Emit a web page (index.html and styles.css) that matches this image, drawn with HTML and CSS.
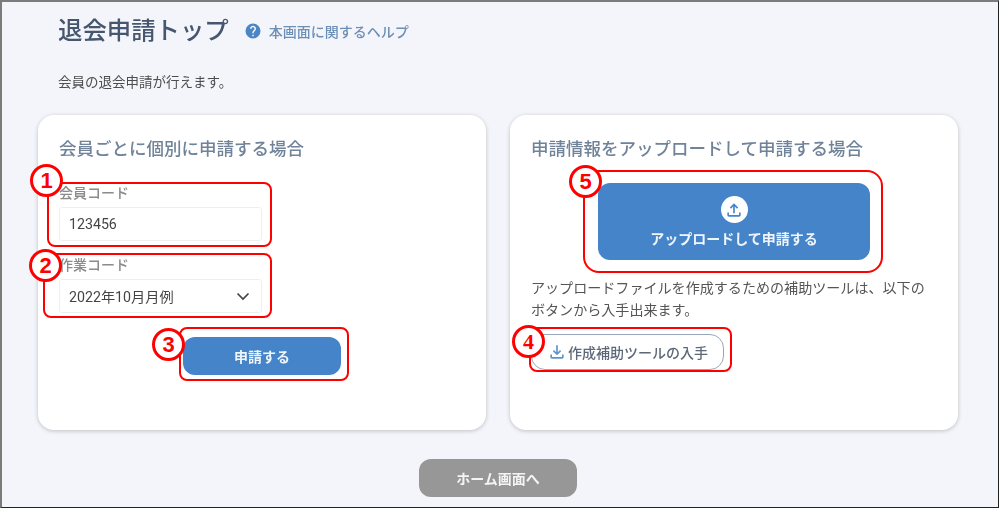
FILE: index.html
```html
<!DOCTYPE html>
<html lang="ja">
<head>
    <meta charset="UTF-8">
    <title>退会申請トップ</title>
    <link rel="stylesheet" href="styles.css">
</head>
<body>
<div class="frame">
    <div class="pageHead">
        <h1 class="pageTitle">退会申請トップ</h1>
        <a class="helpLink">
            <svg class="helpIcon" viewBox="0 0 24 24"><path d="M12 2a10 10 0 1 0 0 20 10 10 0 0 0 0-20zm1 17h-2v-2h2v2zm2.07-7.75l-.9.92C13.45 12.9 13 13.5 13 15h-2v-.5c0-1.1.45-2.1 1.17-2.83l1.24-1.26c.37-.36.59-.86.59-1.41 0-1.1-.9-2-2-2s-2 .9-2 2H8c0-2.21 1.79-4 4-4s4 1.79 4 4c0 .88-.36 1.68-.93 2.25z"/></svg>
            本画面に関するヘルプ
        </a>
    </div>
    <p class="pageDesc">会員の退会申請が行えます。</p>

    <div class="cards">
        <section class="card">
            <h2 class="cardTitle">会員ごとに個別に申請する場合</h2>
            <div class="field">
                <label class="fieldLabel">会員コード</label>
                <div class="fieldBox">123456</div>
            </div>
            <div class="field">
                <label class="fieldLabel">作業コード</label>
                <div class="fieldBox">
                    2022年10月月例
                    <svg class="chevron" viewBox="0 0 14 9"><path d="M1.5 1.5 7 7l5.500-5.500"/></svg>
                </div>
            </div>
            <div class="submitRow">
                <button class="btn btnSubmit">申請する</button>
            </div>
        </section>

        <section class="card">
            <h2 class="cardTitle">申請情報をアップロードして申請する場合</h2>
            <div class="uploadRow">
                <button class="btn btnUpload">
                    <span class="uploadIcon">
                        <svg viewBox="0 0 24 24"><path d="M18 15v3H6v-3H4v3c0 1.100.9 2 2 2h12c1.100 0 2-.9 2-2v-3h-2zM7 9l1.410 1.410L11 7.830V16h2V7.830l2.590 2.580L17 9l-5-5-5 5z"/></svg>
                    </span>
                    アップロードして申請する
                </button>
            </div>
            <p class="cardText">アップロードファイルを作成するための補助ツールは、以下の<br>ボタンから入手出来ます。</p>
            <button class="btnTool">
                <svg class="toolIcon" viewBox="0 0 24 24"><path d="M18 15v3H6v-3H4v3c0 1.100.9 2 2 2h12c1.100 0 2-.9 2-2v-3h-2zm-1-4-1.410-1.410L13 12.170V4h-2v8.170L8.410 9.590 7 11l5 5 5-5z"/></svg>
                作成補助ツールの入手
            </button>
        </section>
    </div>

    <div class="homeRow">
        <button class="btn btnHome">ホーム画面へ</button>
    </div>

    <!-- 赤枠と番号の注記 -->
    <div class="note box1"></div>
    <div class="note box2"></div>
    <div class="note box3"></div>
    <div class="note box4"></div>
    <div class="note box5"></div>
    <span class="num num1">1</span>
    <span class="num num2">2</span>
    <span class="num num3">3</span>
    <span class="num num4">4</span>
    <span class="num num5">5</span>
</div>
</body>
</html>
```

FILE: styles.css
```css
* {
    box-sizing: border-box;
}

html, body {
    margin: 0;
    background: #fff;
}

.frame {
    position: relative;
    width: 999px;
    height: 508px;
    padding: 12px 0 0 0;
    overflow: hidden;
    background: #f4f5fa;
    border-top: 2px solid #7b7b7b;
    border-left: 2px solid #7b7b7b;
    border-right: 1px solid #222;
    border-bottom: 1px solid #222;
    font-family: "Noto Sans CJK JP", "Noto Sans", sans-serif;
    color: #4a4a4a;
}

/* 元画像が縮小でぼやけているので本文だけ少しぼかす */
.pageHead, .pageDesc, .cards, .homeRow {
    filter: blur(.35px);
}

.pageHead {
    display: flex;
    align-items: center;
    height: 30px;
    padding-left: 56px;
}

.pageTitle {
    margin: 0;
    font-size: 24.4px;
    line-height: 30px;
    font-weight: 500;
    color: #46566e;
}

.helpLink {
    display: flex;
    align-items: center;
    margin: 3px 0 0 15px;
    font-size: 14px;
    font-weight: 500;
    color: #6c8fb5;
}

.helpIcon {
    width: 18px;
    height: 18px;
    margin-right: 7px;
    fill: #4a86c5;
}

.pageDesc {
    margin: 27px 0 0 56px;
    font-size: 13.5px;
    line-height: 20px;
    color: #4d4d4d;
}

.cards {
    display: flex;
    gap: 24px;
    margin: 24px 0 0 36px;
}

.card {
    width: 448px;
    height: 315px;
    padding: 21px 21px 0;
    background: #fff;
    border-radius: 16px;
    box-shadow: 0 1px 4px rgba(0, 0, 0, .22);
}

.cardTitle {
    margin: 0;
    font-size: 17.5px;
    line-height: 24px;
    font-weight: 500;
    color: #708399;
}

.field {
    margin-top: 22px;
    height: 61px;
}

.field + .field {
    margin-top: 11px;
}

.fieldLabel {
    display: block;
    font-size: 14px;
    line-height: 20px;
    font-weight: 500;
    color: #8b8b8b;
}

.fieldBox {
    display: flex;
    align-items: center;
    justify-content: space-between;
    width: 203px;
    height: 34px;
    margin-top: 5px;
    padding: 0 11px 0 9px;
    background: #fff;
    border: 1px solid #efefef;
    border-radius: 3px;
    font-family: Roboto, "Noto Sans CJK JP", sans-serif;
    font-size: 14.2px;
    color: #444;
}

.chevron {
    width: 14px;
    height: 9px;
    fill: none;
    stroke: #444;
    stroke-width: 1.7;
}

.btn {
    display: block;
    border: 0;
    color: #eef5fb;
    font-family: inherit;
    font-size: 14px;
    font-weight: 700;
    border-radius: 12px;
}

.submitRow {
    display: flex;
    justify-content: center;
    margin-top: 22px;
}

.btnSubmit {
    width: 158px;
    height: 38px;
    background: #4684c9;
}

.uploadRow {
    display: flex;
    justify-content: center;
    margin-top: 23px;
}

.btnUpload {
    display: flex;
    flex-direction: column;
    align-items: center;
    width: 272px;
    height: 77px;
    padding-top: 13px;
    background: #4684c9;
}

.uploadIcon {
    display: flex;
    align-items: center;
    justify-content: center;
    width: 27px;
    height: 27px;
    margin-bottom: 5px;
    background: #fff;
    border-radius: 50%;
}

.uploadIcon svg {
    width: 20px;
    height: 20px;
    fill: #4684c9;
}

.cardText {
    margin: 16px 0 0;
    font-size: 14.07px;
    line-height: 22px;
    color: #555;
}

.btnTool {
    display: flex;
    align-items: center;
    width: 193px;
    height: 36px;
    margin-top: 14px;
    padding: 0 0 0 15px;
    background: #fff;
    border: 1.5px solid #96a8b8;
    border-radius: 14px;
    font-family: inherit;
    font-size: 14px;
    font-weight: 500;
    color: #5c6878;
}

.toolIcon {
    width: 20px;
    height: 20px;
    margin-right: 1px;
    fill: #5f94c8;
}

.homeRow {
    display: flex;
    justify-content: center;
    margin-top: 29px;
    padding-right: 4px;
}

.btnHome {
    width: 158px;
    height: 38px;
    background: #979797;
    color: #f4f4f4;
}

/* 注記 */
.note {
    position: absolute;
    border: 2px solid #f00;
    border-radius: 8px;
}

.box1 { left: 45px; top: 180px; width: 225px; height: 65px; }
.box2 { left: 41px; top: 251px; width: 229px; height: 65px; }
.box3 { left: 177px; top: 325px; width: 170px; height: 54px; }
.box4 { left: 527px; top: 325px; width: 203px; height: 45px; }
.box5 { left: 581px; top: 168px; width: 300px; height: 103px; border-radius: 16px; }

.num {
    position: absolute;
    width: 33px;
    height: 33px;
    background: #fff;
    border: 3px solid #f00;
    border-radius: 50%;
    color: #f00;
    font-family: "Liberation Sans", sans-serif;
    font-size: 22px;
    font-weight: 700;
    line-height: 27px;
    text-align: center;
}

.num1 { left: 28px; top: 162px; }
.num2 { left: 27px; top: 247px; }
.num3 { left: 150px; top: 326px; }
.num4 { left: 510px; top: 323px; font-family: "Liberation Serif", serif; }
.num5 { left: 567px; top: 163px; }
```
